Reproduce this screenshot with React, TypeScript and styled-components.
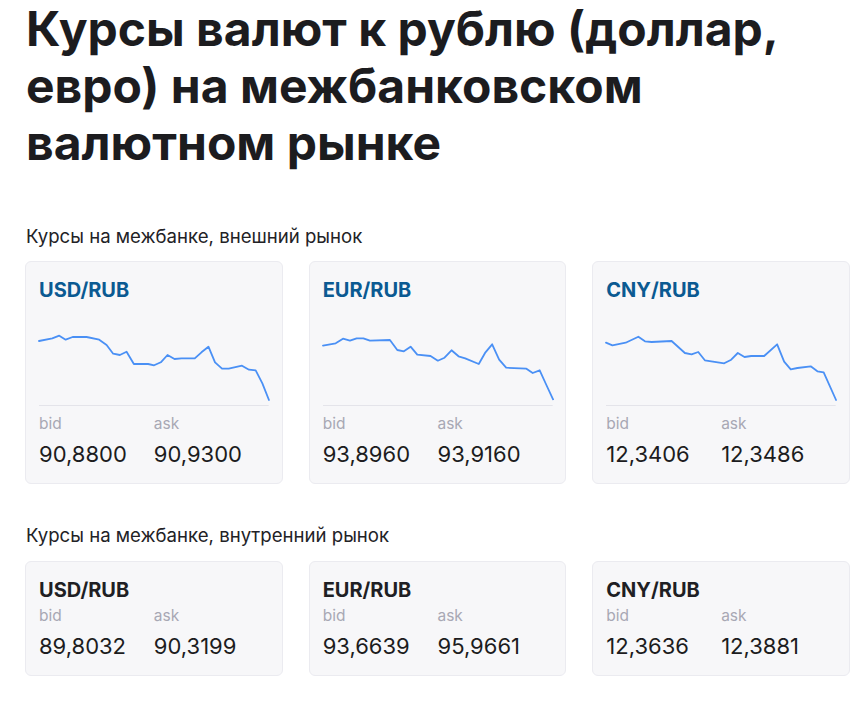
import styled, { createGlobalStyle } from 'styled-components';

const GlobalStyle = createGlobalStyle`
  body {
    margin: 0;
    background: #ffffff;
    font-family: 'Inter', 'Noto Sans', sans-serif;
    color: #1c1c20;
  }
`;

const Page = styled.div`
  padding: 0 14px 0 25px;
`;

const Heading = styled.h1`
  margin: 0 0 52px 1px;
  font-size: 48px;
  line-height: 57px;
  font-weight: 700;
  color: #1c1c1f;
`;

const SectionLabel = styled.div<{ $first?: boolean }>`
  margin: ${(p) => (p.$first ? '0 0 12px' : '38px 0 13px')} 1px;
  font-size: 18.6px;
  line-height: 26px;
  color: #222226;
`;

const CardRow = styled.div`
  display: grid;
  grid-template-columns: repeat(3, 1fr);
  gap: 26px;
`;

const Card = styled.div`
  background: #f7f7f9;
  border: 1px solid #ebebf0;
  border-radius: 6px;
  padding: 16px 13px 15px 13px;
`;

const Pair = styled.div<{ $accent?: boolean }>`
  font-size: 20px;
  line-height: 24px;
  font-weight: 700;
  color: ${(p) => (p.$accent ? '#0b5a92' : '#1f1f24')};
`;

const Chart = styled.svg`
  display: block;
  width: 100%;
  height: 104px;
  margin-bottom: 8px;
  overflow: visible;
`;

const Quotes = styled.div<{ $compact?: boolean }>`
  display: grid;
  grid-template-columns: 1fr 1fr;
  margin-top: ${(p) => (p.$compact ? '4px' : '0')};
`;

const Label = styled.div`
  font-size: 15.5px;
  line-height: 20px;
  color: #a8a8b4;
`;

const Value = styled.div`
  margin-top: 6px;
  font-size: 22px;
  line-height: 28px;
  color: #1c1c20;
`;

type Point = [number, number];

const external: { pair: string; bid: string; ask: string; points: Point[] }[] = [
  {
    pair: 'USD/RUB',
    bid: '90,8800',
    ask: '90,9300',
    points: [
      [0, 39], [13.3, 36.3], [20.3, 33.7], [26.7, 37.7], [33.7, 35], [47.7, 35], [60.3, 37.7],
      [67.7, 43], [74.3, 51.7], [81, 53], [87.7, 49.7], [95, 62], [109.3, 62], [115.3, 63.3],
      [122, 60.3], [128.7, 53], [135.7, 57], [142.7, 56.3], [156, 56.3], [162.7, 50.3],
      [169.7, 44.7], [176.3, 60.3], [183.3, 66.7], [190, 66.7], [203.3, 63.7], [210.3, 67.7],
      [217, 68.3], [223.7, 81.3], [230.3, 98],
    ],
  },
  {
    pair: 'EUR/RUB',
    bid: '93,8960',
    ask: '93,9160',
    points: [
      [0, 43.7], [12.7, 41.3], [20, 36.7], [27, 38.7], [33.7, 36.3], [40.4, 36.3], [47, 38.7],
      [67, 38], [74.4, 48], [81, 49.3], [87.7, 44.7], [94.4, 52.7], [107.7, 54], [115, 58.7],
      [121.7, 55.7], [128.7, 48.3], [135.7, 54.3], [142.4, 56.3], [156, 62], [162.7, 50.3],
      [169.4, 42.3], [176.4, 57.7], [183.4, 65.7], [203.7, 66.7], [210, 71], [217, 68.3],
      [223.7, 83], [230.4, 97.3],
    ],
  },
  {
    pair: 'CNY/RUB',
    bid: '12,3406',
    ask: '12,3486',
    points: [
      [0, 40.7], [6.4, 43.3], [19.7, 40.7], [32.4, 34.7], [39, 39.3], [45.7, 40], [65.7, 39],
      [79, 51], [85.7, 52.3], [92.4, 50], [99, 58.3], [118.4, 61.3], [125.4, 57.7], [132, 51],
      [138.7, 55], [145.4, 54], [158.4, 54], [171.4, 42.3], [178.4, 59.7], [185, 67.3],
      [191.7, 66], [205, 64.3], [211.7, 69.3], [218, 70.3], [230.4, 98],
    ],
  },
];

const internal = [
  { pair: 'USD/RUB', bid: '89,8032', ask: '90,3199' },
  { pair: 'EUR/RUB', bid: '93,6639', ask: '95,9661' },
  { pair: 'CNY/RUB', bid: '12,3636', ask: '12,3881' },
];

const Sparkline = ({ points }: { points: Point[] }) => (
  <Chart viewBox="0 0 230 104" preserveAspectRatio="none">
    <line x1="0" y1="103.5" x2="230" y2="103.5" stroke="#e4e4ea" strokeWidth="1" />
    <polyline
      points={points.map(([x, y]) => `${x},${y}`).join(' ')}
      fill="none"
      stroke="#4a90f5"
      strokeWidth="1.8"
      strokeLinejoin="round"
      strokeLinecap="round"
      vectorEffect="non-scaling-stroke"
    />
  </Chart>
);

const QuoteBlock = ({ bid, ask, compact }: { bid: string; ask: string; compact?: boolean }) => (
  <Quotes $compact={compact}>
    <div>
      <Label>bid</Label>
      <Value>{bid}</Value>
    </div>
    <div>
      <Label>ask</Label>
      <Value>{ask}</Value>
    </div>
  </Quotes>
);

export default function App() {
  return (
    <Page>
      <GlobalStyle />
      <Heading>Курсы валют к рублю (доллар, евро) на межбанковском валютном рынке</Heading>

      <SectionLabel $first>Курсы на межбанке, внешний рынок</SectionLabel>
      <CardRow>
        {external.map((item) => (
          <Card key={item.pair}>
            <Pair $accent>{item.pair}</Pair>
            <Sparkline points={item.points} />
            <QuoteBlock bid={item.bid} ask={item.ask} />
          </Card>
        ))}
      </CardRow>

      <SectionLabel>Курсы на межбанке, внутренний рынок</SectionLabel>
      <CardRow>
        {internal.map((item) => (
          <Card key={item.pair}>
            <Pair>{item.pair}</Pair>
            <QuoteBlock bid={item.bid} ask={item.ask} compact />
          </Card>
        ))}
      </CardRow>
    </Page>
  );
}
